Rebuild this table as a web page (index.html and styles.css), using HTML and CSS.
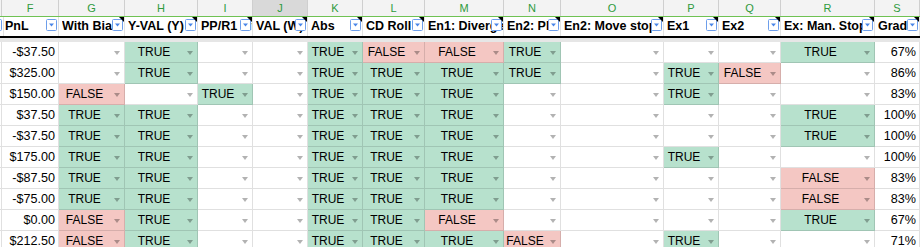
FILE: index.html
```html
<!DOCTYPE html>
<html>
<head>
<meta charset="utf-8">
<link rel="stylesheet" href="styles.css">
</head>
<body>
<div class="sheet">
  <div class="row letters">
    <div></div><div>F</div><div>G</div><div>H</div><div>I</div><div class="sel">J</div><div>K</div><div>L</div><div>M</div><div>N</div><div>O</div><div>P</div><div>Q</div><div>R</div><div>S</div>
  </div>
  <div class="row head">
    <div class="h"><svg class="fi" viewBox="0 0 11 12" width="11" height="12"><rect x="0.5" y="0.5" width="10" height="11" rx="1" fill="#fff" stroke="#6d9eeb"/><path d="M3 4.5h5l-2.5 3z" fill="#4a86e8"/></svg></div>
    <div class="h"><span class="lb">PnL</span><svg class="fi" viewBox="0 0 11 12" width="11" height="12"><rect x="0.5" y="0.5" width="10" height="11" rx="1" fill="#fff" stroke="#6d9eeb"/><path d="M3 4.5h5l-2.5 3z" fill="#4a86e8"/></svg></div>
    <div class="h n"><span class="lb">With Bias</span><svg class="fi" viewBox="0 0 11 12" width="11" height="12"><rect x="0.5" y="0.5" width="10" height="11" rx="1" fill="#fff" stroke="#6d9eeb"/><path d="M3 4.5h5l-2.5 3z" fill="#4a86e8"/></svg></div>
    <div class="h n"><span class="lb">Y-VAL (Y)</span><svg class="fi" viewBox="0 0 11 12" width="11" height="12"><rect x="0.5" y="0.5" width="10" height="11" rx="1" fill="#fff" stroke="#6d9eeb"/><path d="M3 4.5h5l-2.5 3z" fill="#4a86e8"/></svg></div>
    <div class="h n"><span class="lb">PP/R1 hit</span><svg class="fi" viewBox="0 0 11 12" width="11" height="12"><rect x="0.5" y="0.5" width="10" height="11" rx="1" fill="#fff" stroke="#6d9eeb"/><path d="M3 4.5h5l-2.5 3z" fill="#4a86e8"/></svg></div>
    <div class="h n"><span class="lb">VAL (W)</span><svg class="fi" viewBox="0 0 11 12" width="11" height="12"><rect x="0.5" y="0.5" width="10" height="11" rx="1" fill="#fff" stroke="#6d9eeb"/><path d="M3 4.5h5l-2.5 3z" fill="#4a86e8"/></svg></div>
    <div class="h n"><span class="lb">Abs</span><svg class="fi" viewBox="0 0 11 12" width="11" height="12"><rect x="0.5" y="0.5" width="10" height="11" rx="1" fill="#fff" stroke="#6d9eeb"/><path d="M3 4.5h5l-2.5 3z" fill="#4a86e8"/></svg></div>
    <div class="h n"><span class="lb">CD Roll</span><svg class="fi" viewBox="0 0 11 12" width="11" height="12"><rect x="0.5" y="0.5" width="10" height="11" rx="1" fill="#fff" stroke="#6d9eeb"/><path d="M3 4.5h5l-2.5 3z" fill="#4a86e8"/></svg></div>
    <div class="h n"><span class="lb">En1: Divergence</span><svg class="fi" viewBox="0 0 11 12" width="11" height="12"><rect x="0.5" y="0.5" width="10" height="11" rx="1" fill="#fff" stroke="#6d9eeb"/><path d="M3 4.5h5l-2.5 3z" fill="#4a86e8"/></svg></div>
    <div class="h n"><span class="lb">En2: PB</span><svg class="fi" viewBox="0 0 11 12" width="11" height="12"><rect x="0.5" y="0.5" width="10" height="11" rx="1" fill="#fff" stroke="#6d9eeb"/><path d="M3 4.5h5l-2.5 3z" fill="#4a86e8"/></svg></div>
    <div class="h n"><span class="lb">En2: Move stop</span><svg class="fi" viewBox="0 0 11 12" width="11" height="12"><rect x="0.5" y="0.5" width="10" height="11" rx="1" fill="#fff" stroke="#6d9eeb"/><path d="M3 4.5h5l-2.5 3z" fill="#4a86e8"/></svg></div>
    <div class="h n"><span class="lb">Ex1</span><svg class="fi" viewBox="0 0 11 12" width="11" height="12"><rect x="0.5" y="0.5" width="10" height="11" rx="1" fill="#fff" stroke="#6d9eeb"/><path d="M3 4.5h5l-2.5 3z" fill="#4a86e8"/></svg></div>
    <div class="h n"><span class="lb">Ex2</span><svg class="fi" viewBox="0 0 11 12" width="11" height="12"><rect x="0.5" y="0.5" width="10" height="11" rx="1" fill="#fff" stroke="#6d9eeb"/><path d="M3 4.5h5l-2.5 3z" fill="#4a86e8"/></svg></div>
    <div class="h n"><span class="lb">Ex: Man. Stop</span><svg class="fi" viewBox="0 0 11 12" width="11" height="12"><rect x="0.5" y="0.5" width="10" height="11" rx="1" fill="#fff" stroke="#6d9eeb"/><path d="M3 4.5h5l-2.5 3z" fill="#4a86e8"/></svg></div>
    <div class="h n"><span class="lb">Grade</span><svg class="fi" viewBox="0 0 11 12" width="11" height="12"><rect x="0.5" y="0.5" width="10" height="11" rx="1" fill="#fff" stroke="#6d9eeb"/><path d="M3 4.5h5l-2.5 3z" fill="#4a86e8"/></svg></div>
  </div>
  <div class="freeze"></div>

  <div class="row data">
    <div class="e"></div><div class="num">-$37.50</div>
    <div class="v"></div><div class="v t">TRUE</div><div class="v"></div><div class="v"></div>
    <div class="v t">TRUE</div><div class="v f">FALSE</div><div class="v f">FALSE</div><div class="v t">TRUE</div>
    <div class="v"></div><div class="v"></div><div class="v"></div><div class="v t">TRUE</div>
    <div class="pct">67%</div>
  </div>
  <div class="row data">
    <div class="e"></div><div class="num">$325.00</div>
    <div class="v"></div><div class="v t">TRUE</div><div class="v"></div><div class="v"></div>
    <div class="v t">TRUE</div><div class="v t">TRUE</div><div class="v t">TRUE</div><div class="v t">TRUE</div>
    <div class="v"></div><div class="v t">TRUE</div><div class="v f">FALSE</div><div class="v"></div>
    <div class="pct">86%</div>
  </div>
  <div class="row data">
    <div class="e"></div><div class="num">$150.00</div>
    <div class="v f">FALSE</div><div class="v"></div><div class="v t">TRUE</div><div class="v"></div>
    <div class="v t">TRUE</div><div class="v t">TRUE</div><div class="v t">TRUE</div><div class="v"></div>
    <div class="v"></div><div class="v t">TRUE</div><div class="v"></div><div class="v"></div>
    <div class="pct">83%</div>
  </div>
  <div class="row data">
    <div class="e"></div><div class="num">$37.50</div>
    <div class="v t">TRUE</div><div class="v t">TRUE</div><div class="v"></div><div class="v"></div>
    <div class="v t">TRUE</div><div class="v t">TRUE</div><div class="v t">TRUE</div><div class="v"></div>
    <div class="v"></div><div class="v"></div><div class="v"></div><div class="v t">TRUE</div>
    <div class="pct">100%</div>
  </div>
  <div class="row data">
    <div class="e"></div><div class="num">-$37.50</div>
    <div class="v t">TRUE</div><div class="v t">TRUE</div><div class="v"></div><div class="v"></div>
    <div class="v t">TRUE</div><div class="v t">TRUE</div><div class="v t">TRUE</div><div class="v"></div>
    <div class="v"></div><div class="v"></div><div class="v"></div><div class="v t">TRUE</div>
    <div class="pct">100%</div>
  </div>
  <div class="row data">
    <div class="e"></div><div class="num">$175.00</div>
    <div class="v t">TRUE</div><div class="v t">TRUE</div><div class="v"></div><div class="v"></div>
    <div class="v t">TRUE</div><div class="v t">TRUE</div><div class="v t">TRUE</div><div class="v"></div>
    <div class="v"></div><div class="v t">TRUE</div><div class="v"></div><div class="v"></div>
    <div class="pct">100%</div>
  </div>
  <div class="row data">
    <div class="e"></div><div class="num">-$87.50</div>
    <div class="v t">TRUE</div><div class="v t">TRUE</div><div class="v"></div><div class="v"></div>
    <div class="v t">TRUE</div><div class="v t">TRUE</div><div class="v t">TRUE</div><div class="v"></div>
    <div class="v"></div><div class="v"></div><div class="v"></div><div class="v f">FALSE</div>
    <div class="pct">83%</div>
  </div>
  <div class="row data">
    <div class="e"></div><div class="num">-$75.00</div>
    <div class="v t">TRUE</div><div class="v t">TRUE</div><div class="v"></div><div class="v"></div>
    <div class="v t">TRUE</div><div class="v t">TRUE</div><div class="v t">TRUE</div><div class="v"></div>
    <div class="v"></div><div class="v"></div><div class="v"></div><div class="v f">FALSE</div>
    <div class="pct">83%</div>
  </div>
  <div class="row data">
    <div class="e"></div><div class="num">$0.00</div>
    <div class="v f">FALSE</div><div class="v t">TRUE</div><div class="v"></div><div class="v"></div>
    <div class="v t">TRUE</div><div class="v t">TRUE</div><div class="v f">FALSE</div><div class="v"></div>
    <div class="v"></div><div class="v"></div><div class="v"></div><div class="v t">TRUE</div>
    <div class="pct">67%</div>
  </div>
  <div class="row data">
    <div class="e"></div><div class="num">$212.50</div>
    <div class="v f">FALSE</div><div class="v t">TRUE</div><div class="v"></div><div class="v"></div>
    <div class="v t">TRUE</div><div class="v t">TRUE</div><div class="v t">TRUE</div><div class="v f">FALSE</div>
    <div class="v"></div><div class="v t">TRUE</div><div class="v"></div><div class="v"></div>
    <div class="pct">71%</div>
  </div>
</div>
</body>
</html>
```

FILE: styles.css
```css
* { box-sizing: border-box; margin: 0; padding: 0; }
html, body { width: 920px; height: 247px; overflow: hidden; background: #fff; }
body { font-family: "Liberation Sans", Arial, sans-serif; font-size: 12px; color: #000; }

.sheet { width: 920px; }

.row {
  display: grid;
  grid-template-columns: 2px 57px 66px 73px 55px 55px 55px 62px 79px 57px 103px 55px 62px 94px 45px;
}

/* column letters */
.letters { height: 17px; background: #f3f3f3; border-bottom: 1px solid #6fc253; }
.letters > div {
  border-right: 1px solid #cfcfcf;
  color: #2e9a3c;
  font-size: 11px;
  line-height: 16px;
  text-align: center;
}
.letters .sel { background: #d9d9d9; }

/* header row */
.head { height: 21px; border-bottom: 2px solid #000; }
.h {
  position: relative;
  border-right: 1px solid #e2e3e3;
  font-weight: bold;
  font-size: 12.5px;
  line-height: 19px;
  padding-left: 3px;
  white-space: nowrap;
  overflow: hidden;
}
.lb { display: block; overflow: hidden; }
.fi { position: absolute; right: 1px; top: 2px; }
.n::after {
  content: "";
  position: absolute;
  top: 0;
  right: 0;
  width: 0;
  height: 0;
  border-top: 5px solid #000;
  border-left: 5px solid transparent;
}

.freeze { height: 4px; background: #e6e6e6; }

/* data */
.data { height: 21px; }
.data > div {
  border-right: 1px solid rgba(0, 0, 0, 0.12);
  border-bottom: 1px solid rgba(0, 0, 0, 0.12);
  line-height: 20px;
  white-space: nowrap;
  overflow: hidden;
}
.num, .pct { text-align: right; padding-right: 3px; font-size: 12.6px; }
.v { position: relative; text-align: center; padding-right: 14px; }
.v::after {
  content: "";
  position: absolute;
  right: 4px;
  top: 9px;
  width: 6px;
  height: 4px;
  background: rgba(0, 0, 0, 0.3);
  clip-path: polygon(0 0, 100% 0, 50% 100%);
}
.t { background: #b7e1cd; }
.f { background: #f4c7c3; }
```
